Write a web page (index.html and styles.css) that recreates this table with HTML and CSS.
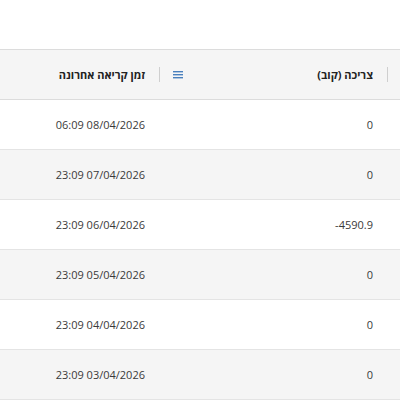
FILE: index.html
```html
<!DOCTYPE html>
<html lang="he" dir="rtl">
<head>
    <meta charset="UTF-8">
    <meta name="viewport" content="width=device-width, initial-scale=1.0">
    <title>קריאות מונה</title>
    <link rel="stylesheet" href="styles.css">
</head>
<body>
    <div class="page">
        <div class="toolbar"></div>

        <div class="grid">
            <div class="row header-row">
                <div class="cell edge-cell"><span class="sep"></span></div>
                <div class="cell header-cell">
                    <span class="header-label">צריכה (קוב)</span>
                    <span class="menu-icon">
                        <svg width="10" height="8" viewBox="0 0 10 8">
                            <rect x="0" y="0" width="10" height="1.4" fill="#4a80bd"/>
                            <rect x="0" y="3" width="10" height="1.4" fill="#4a80bd"/>
                            <rect x="0" y="6" width="10" height="1.4" fill="#4a80bd"/>
                        </svg>
                    </span>
                    <span class="sep"></span>
                </div>
                <div class="cell header-cell">
                    <span class="header-label">זמן קריאה אחרונה</span>
                </div>
            </div>

            <div class="row">
                <div class="cell edge-cell"></div>
                <div class="cell">0</div>
                <div class="cell"><span class="ltr">06:09 08/04/2026</span></div>
            </div>
            <div class="row">
                <div class="cell edge-cell"></div>
                <div class="cell">0</div>
                <div class="cell"><span class="ltr">23:09 07/04/2026</span></div>
            </div>
            <div class="row">
                <div class="cell edge-cell"></div>
                <div class="cell"><span class="ltr">-4590.9</span></div>
                <div class="cell"><span class="ltr">23:09 06/04/2026</span></div>
            </div>
            <div class="row">
                <div class="cell edge-cell"></div>
                <div class="cell">0</div>
                <div class="cell"><span class="ltr">23:09 05/04/2026</span></div>
            </div>
            <div class="row">
                <div class="cell edge-cell"></div>
                <div class="cell">0</div>
                <div class="cell"><span class="ltr">23:09 04/04/2026</span></div>
            </div>
            <div class="row">
                <div class="cell edge-cell"></div>
                <div class="cell">0</div>
                <div class="cell"><span class="ltr">23:09 03/04/2026</span></div>
            </div>
        </div>
    </div>
</body>
</html>
```

FILE: styles.css
```css
* {
    margin: 0;
    padding: 0;
    box-sizing: border-box;
}

body {
    font-family: "Open Sans", "DejaVu Sans", sans-serif;
    background-color: #ffffff;
    color: #3a3a3a;
    font-size: 11px;
    overflow: hidden;
}

.page {
    width: 400px;
    height: 400px;
    overflow: hidden;
}

.toolbar {
    height: 49px;
    background-color: #ffffff;
}

.grid {
    border-top: 1px solid #dcdcdc;
}

.row {
    display: grid;
    grid-template-columns: 13px 228px 1fr;
    height: 50px;
    border-bottom: 1px solid #e4e4e4;
    background-color: #ffffff;
}

.row:nth-child(odd) {
    background-color: #f5f5f5;
}

.header-row {
    background-color: #f5f5f5;
    border-bottom: 1px solid #dcdcdc;
}

.cell {
    display: flex;
    align-items: center;
    padding-right: 14px;
    white-space: nowrap;
}

.edge-cell {
    padding: 0;
    justify-content: flex-end;
}

.header-label {
    font-weight: bold;
    color: #222222;
}

.menu-icon {
    display: flex;
    margin-right: auto;
    margin-left: 13px;
}

.sep {
    width: 1px;
    height: 15px;
    background-color: #cfcfcf;
}

.ltr {
    direction: ltr;
    unicode-bidi: isolate;
}
```
